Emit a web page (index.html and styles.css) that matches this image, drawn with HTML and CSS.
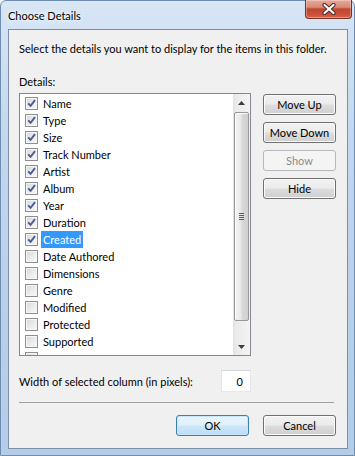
FILE: index.html
```html
<!DOCTYPE html>
<html lang="en">
<head>
    <meta charset="UTF-8">
    <title>Choose Details</title>
    <link rel="stylesheet" href="styles.css">
</head>
<body>

<svg class="defs" width="0" height="0">
    <symbol id="tick" viewBox="0 0 9 9">
        <path d="M1.2 4.3 L3.6 6.9 L8 1.2" fill="none" stroke="#4a5c92" stroke-width="1.9"/>
    </symbol>
</svg>

<div class="window">
    <div class="titlebar">
        <span class="title">Choose Details</span>
        <div class="close">
            <svg width="14" height="12" viewBox="0 0 14 12">
                <path d="M2.5 2 L11.5 10 M11.5 2 L2.5 10" stroke="#4a2a24" stroke-width="4.2" stroke-linecap="round"/>
                <path d="M2.5 2 L11.5 10 M11.5 2 L2.5 10" stroke="#fff" stroke-width="2.2" stroke-linecap="round"/>
            </svg>
        </div>
    </div>

    <div class="client">
        <p class="intro">Select the details you want to display for the items in this folder.</p>
        <p class="label">Details:</p>

        <div class="main">
            <div class="listbox">
                <ul class="items">
                    <li><span class="check"><svg><use href="#tick"/></svg></span><span class="name">Name</span></li>
                    <li><span class="check"><svg><use href="#tick"/></svg></span><span class="name">Type</span></li>
                    <li><span class="check"><svg><use href="#tick"/></svg></span><span class="name">Size</span></li>
                    <li><span class="check"><svg><use href="#tick"/></svg></span><span class="name">Track Number</span></li>
                    <li><span class="check"><svg><use href="#tick"/></svg></span><span class="name">Artist</span></li>
                    <li><span class="check"><svg><use href="#tick"/></svg></span><span class="name">Album</span></li>
                    <li><span class="check"><svg><use href="#tick"/></svg></span><span class="name">Year</span></li>
                    <li><span class="check"><svg><use href="#tick"/></svg></span><span class="name">Duration</span></li>
                    <li class="sel"><span class="check"><svg><use href="#tick"/></svg></span><span class="name">Created</span></li>
                    <li><span class="check"></span><span class="name">Date Authored</span></li>
                    <li><span class="check"></span><span class="name">Dimensions</span></li>
                    <li><span class="check"></span><span class="name">Genre</span></li>
                    <li><span class="check"></span><span class="name">Modified</span></li>
                    <li><span class="check"></span><span class="name">Protected</span></li>
                    <li><span class="check"></span><span class="name">Supported</span></li>
                    <li><span class="check"></span></li>
                </ul>
                <div class="scrollbar">
                    <div class="sb-btn">
                        <svg width="7" height="4" viewBox="0 0 7 4"><path d="M0 4 L3.5 0 L7 4 Z" fill="#3d3d3d"/></svg>
                    </div>
                    <div class="sb-track">
                        <div class="thumb">
                            <span class="grip"></span>
                        </div>
                    </div>
                    <div class="sb-btn">
                        <svg width="7" height="4" viewBox="0 0 7 4"><path d="M0 0 L7 0 L3.5 4 Z" fill="#3d3d3d"/></svg>
                    </div>
                </div>
            </div>

            <div class="side">
                <button>Move Up</button>
                <button>Move Down</button>
                <button disabled>Show</button>
                <button>Hide</button>
            </div>
        </div>

        <div class="width-row">
            <span>Width of selected column (in pixels):</span>
            <input type="text" value="0">
        </div>

        <div class="sep"></div>

        <div class="footer">
            <button class="default">OK</button>
            <button>Cancel</button>
        </div>
    </div>
</div>

</body>
</html>
```

FILE: styles.css
```css
body {
    margin: 0;
    background-color: #fff;
    font-family: Lato, "Noto Sans", sans-serif;
    font-size: 11px;
    color: #000;
}

.defs {
    position: absolute;
}

.window {
    position: relative;
    width: 355px;
    height: 456px;
    box-sizing: border-box;
    padding: 0 6px 6px 7px;
    border: 1px solid #6f8db0;
    border-radius: 6px 6px 0 0;
    background: linear-gradient(to bottom, #d8e6f5, #c3d7ee 30%, #b9d0ea 70%, #b4cce8);
    display: flex;
    flex-direction: column;
}

.titlebar {
    height: 28px;
    box-sizing: border-box;
    padding-top: 7px;
    flex-shrink: 0;
}

.title {
    line-height: 15px;
    text-shadow: 0 0 6px #fff, 0 0 3px #fff;
}

/* red close button over the frame */
.close {
    position: absolute;
    top: -1px;
    right: 2px;
    width: 47px;
    height: 19px;
    box-sizing: border-box;
    border: 1px solid #7a3024;
    border-top: none;
    border-radius: 0 0 4px 4px;
    background: linear-gradient(to bottom, #e8a898, #d98a77 40%, #c24630 50%, #c9503a 80%, #d36a4f);
    box-shadow: inset 0 0 0 1px rgba(255, 255, 255, 0.3);
    display: flex;
    align-items: center;
    justify-content: center;
}

.client {
    flex: 1;
    min-height: 0;
    overflow: hidden;
    background-color: #f0f0f0;
    border: 1px solid #7c8ea5;
    padding: 0 0 0 10px;
    display: flex;
    flex-direction: column;
}

.intro, .label {
    margin: 0;
    line-height: 15px;
    white-space: nowrap;
}

.intro {
    margin-top: 11px;
}

.label {
    margin-top: 18px;
}

.main {
    display: flex;
    margin-top: 4px;
}

.listbox {
    width: 232px;
    height: 263px;
    box-sizing: border-box;
    border: 1px solid #828790;
    background-color: #fff;
    display: flex;
}

.items {
    flex: 1;
    margin: 0;
    padding: 1px 0 0;
    list-style: none;
    overflow: hidden;
}

.items li {
    display: flex;
    align-items: center;
    height: 17px;
    padding-left: 5px;
}

.check {
    position: relative;
    width: 13px;
    height: 13px;
    box-sizing: border-box;
    border: 1px solid #8e8f8f;
    background: linear-gradient(135deg, #d3d6da, #eeeeee 60%, #f7f7f7);
    box-shadow: inset 0 0 0 1px #f6f6f6;
    flex-shrink: 0;
}

.check svg {
    position: absolute;
    left: 1px;
    top: 1px;
    width: 9px;
    height: 9px;
}

.name {
    margin-left: 3px;
    padding: 0 2px;
    line-height: 17px;
    white-space: nowrap;
}

.sel .name {
    background-color: #3399ff;
    color: #fff;
}

.scrollbar {
    width: 17px;
    display: flex;
    flex-direction: column;
    background: linear-gradient(to right, #e2e2e2, #ebebeb 20%, #f1f1f1 80%, #f5f5f5);
}

.sb-btn {
    height: 17px;
    display: flex;
    align-items: center;
    justify-content: center;
}

.sb-track {
    flex: 1;
    padding: 0 1px;
}

.thumb {
    height: 209px;
    margin-top: 1px;
    box-sizing: border-box;
    border: 1px solid #979797;
    border-radius: 2px;
    background: linear-gradient(to right, #f3f3f3, #e8e8e8 45%, #d8d8d8 55%, #cfcfcf);
    box-shadow: inset 1px 1px 0 #fcfcfc;
    display: flex;
    align-items: center;
    justify-content: center;
}

.grip {
    width: 5px;
    height: 7px;
    background: repeating-linear-gradient(to bottom, #5f5f5f 0, #5f5f5f 1px, transparent 1px, transparent 2px);
}

.side {
    display: flex;
    flex-direction: column;
    gap: 7px;
    margin-left: 12px;
    padding-top: 1px;
}

button {
    width: 73px;
    height: 21px;
    padding: 0;
    font: inherit;
    color: #000;
    border: 1px solid #707070;
    border-radius: 3px;
    background: linear-gradient(to bottom, #f2f2f2, #ebebeb 48%, #dddddd 52%, #cfcfcf);
    box-shadow: inset 0 0 0 1px #fbfbfb;
}

button:disabled {
    color: #8d8d8d;
    border-color: #b5b9bc;
    background: #f4f4f4;
    box-shadow: none;
}

button.default {
    border-color: #3c7fb1;
    background: linear-gradient(to bottom, #eaf5fc, #dff0fb 48%, #cde7f8 52%, #bcdcf3);
    box-shadow: inset 0 0 0 1px #c6e6f9;
}

.width-row {
    width: 232px;
    height: 22px;
    margin-top: 14px;
    display: flex;
    align-items: center;
    justify-content: space-between;
    white-space: nowrap;
}

.width-row input {
    width: 30px;
    height: 22px;
    box-sizing: border-box;
    padding: 0 7px 0 0;
    font: inherit;
    text-align: right;
    border: 1px solid;
    border-color: #d5d9de #e3e9ef #e3e9ef #e2e3ea;
    background-color: #fff;
}

.sep {
    height: 1px;
    margin: 10px 13px 0 0;
    background-color: #a0a0a0;
}

.footer {
    display: flex;
    justify-content: flex-end;
    gap: 14px;
    margin-top: 12px;
    padding-right: 11px;
}
```
